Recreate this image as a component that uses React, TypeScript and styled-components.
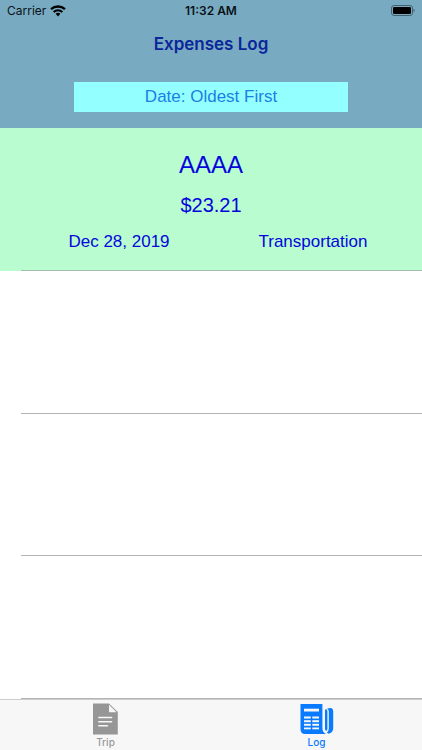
import React, { useState } from "react";
import styled, { createGlobalStyle } from "styled-components";

const GlobalStyle = createGlobalStyle`
  *, *::before, *::after { box-sizing: border-box; }
  body {
    margin: 0;
    background: #ffffff;
    font-family: "Liberation Sans", Arial, sans-serif;
  }
  h1, h2, p { margin: 0; font-weight: 400; }
`;

const Screen = styled.div`
  min-height: 100vh;
  display: flex;
  flex-direction: column;
`;

const Header = styled.header`
  background: #78abc2;
  height: 128px;
  display: flex;
  flex-direction: column;
`;

const StatusBar = styled.div`
  height: 22px;
  padding: 0 7px;
  display: grid;
  grid-template-columns: 1fr auto 1fr;
  align-items: center;
  font: 400 12px/22px Inter, sans-serif;
  color: #0b1217;
`;

const Carrier = styled.div`
  display: flex;
  align-items: center;
  gap: 4px;
`;

const Clock = styled.time`
  font-weight: 600;
`;

const BatterySlot = styled.div`
  display: flex;
  justify-content: flex-end;
`;

const Title = styled.h1`
  font: 600 17px/44px Inter, sans-serif;
  color: #0b2699;
  text-align: center;
`;

const SortButton = styled.button`
  width: 65%;
  height: 30px;
  margin: 16px auto 0;
  padding: 0;
  border: 0;
  border-radius: 0;
  background: #94ffff;
  color: #1a80e6;
  font: 400 17px/30px "Liberation Sans", Arial, sans-serif;
  cursor: pointer;
`;

const List = styled.ul`
  flex: 1;
  margin: 0;
  padding: 0;
  list-style: none;
  display: grid;
  grid-auto-rows: minmax(140px, 1fr);
`;

const Row = styled.li<{ $filled?: boolean }>`
  display: flex;
  flex-direction: column;
  background: ${(p) => (p.$filled ? "#b8fccf" : "#ffffff")};
  color: #0505dc;
  text-align: center;

  &::after {
    content: "";
    height: 1px;
    margin: auto 0 0 21px;
    background: ${(p) => (p.$filled ? "#a5bdb0" : "#b4b4b4")};
  }
`;

const Name = styled.h2`
  padding-top: 21px;
  font-size: 24px;
  line-height: 32px;
`;

const Amount = styled.p`
  padding-top: 9px;
  font-size: 20px;
  line-height: 30px;
`;

const Details = styled.div`
  display: grid;
  grid-template-columns: 1fr 1fr;
  padding: 10px 12px 0 22px;
  font-size: 17px;
  line-height: 24px;
`;

const TabBar = styled.nav`
  height: 51px;
  display: flex;
  background: #f7f7f7;
  border-top: 1px solid #cccccc;
`;

const Tab = styled.a<{ $active?: boolean }>`
  flex: 1;
  display: flex;
  flex-direction: column;
  align-items: center;
  padding-top: 3px;
  font: 500 10px/12px Inter, sans-serif;
  color: ${(p) => (p.$active ? "#0a7aff" : "#999999")};
  text-decoration: none;

  svg { margin-bottom: 1px; }
`;

const WifiIcon = () => (
  <svg width="16" height="12" viewBox="0 0 16 12" fill="none" stroke="#000" aria-hidden="true">
    <path d="M1 4.2C5 .6 11 .6 15 4.2" strokeWidth="2.3" />
    <path d="M3.6 7C6.2 4.7 9.8 4.7 12.4 7" strokeWidth="2.1" />
    <path d="M5.6 8.8C7 7.5 9 7.5 10.4 8.8L8 11.4Z" fill="#000" stroke="none" />
  </svg>
);

const BatteryIcon = () => (
  <svg width="25" height="12" viewBox="0 0 25 12" role="img" aria-label="Battery full">
    <rect x="1.5" y="0.5" width="21" height="10" rx="2.6" fill="none" stroke="#42616e" />
    <rect x="3" y="2" width="18" height="7" rx="1.2" fill="#000" />
    <path d="M23.6 3.8C24.9 4.3 24.9 6.7 23.6 7.2Z" fill="#36515c" />
  </svg>
);

const TripIcon = () => (
  <svg width="25" height="32" viewBox="0 0 25 32" aria-hidden="true">
    <path d="M0 0.5H16L24.8 9V31.5H0Z" fill="#969696" />
    <path d="M16 1.8L23.6 9.2H16Z" fill="#f7f7f7" />
    <path d="M5.8 14.5H18.7M5.8 18.7H18.7M5.8 22.8H14.5" stroke="#f7f7f7" strokeWidth="1.4" strokeLinecap="round" />
  </svg>
);

const LogIcon = () => (
  <svg width="34" height="32" viewBox="0 0 34 32" aria-hidden="true">
    <path
      d="M.5 1H22.4V25C22.4 28 23.6 30 26 31H5C2 31 .5 29 .5 26Z"
      fill="#0a7aff"
    />
    <path
      d="M25 8.2V25.5Q25 27.8 26.2 27.8Q27.4 27.8 27.4 25.5V8.5Q27.4 6 25.8 6Q25 6.4 25 8.2Z"
      fill="#0a7aff"
    />
    <path
      d="M27 5.8Q28.8 5 30.3 5Q33.2 5 33.2 8.5V25Q33.2 29.6 28.6 30.8L26.8 29.4Q28.8 28.2 28.8 25.5V8.5Q28.8 6.6 27 5.8Z"
      fill="#0a7aff"
    />
    <g fill="#f7f7f7">
      <rect x="4" y="5.7" width="15" height="2.8" />
      <rect x="4" y="13.5" width="6.8" height="2" />
      <rect x="12.3" y="13.5" width="6.7" height="2" />
      <rect x="4" y="17.2" width="6.8" height="2" />
      <rect x="12.3" y="17.2" width="6.7" height="2" />
      <rect x="4" y="20.8" width="6.8" height="2" />
      <rect x="12.3" y="20.8" width="6.7" height="2" />
      <rect x="4" y="24.5" width="6.8" height="1.8" />
      <rect x="12.3" y="24.5" width="6.7" height="1.8" />
    </g>
  </svg>
);

const expenses = [
  { name: "AAAA", amount: 23.21, date: "Dec 28, 2019", category: "Transportation" },
];
const emptyRows = [1, 2, 3];

export default function App() {
  const [oldestFirst, setOldestFirst] = useState(true);

  return (
    <Screen>
      <GlobalStyle />
      <Header>
        <StatusBar>
          <Carrier>
            Carrier <WifiIcon />
          </Carrier>
          <Clock>11:32 AM</Clock>
          <BatterySlot>
            <BatteryIcon />
          </BatterySlot>
        </StatusBar>
        <Title>Expenses Log</Title>
        <SortButton type="button" onClick={() => setOldestFirst(!oldestFirst)}>
          {oldestFirst ? "Date: Oldest First" : "Date: Newest First"}
        </SortButton>
      </Header>
      <List>
        {expenses.map((e) => (
          <Row key={e.name} $filled>
            <Name>{e.name}</Name>
            <Amount>${e.amount.toFixed(2)}</Amount>
            <Details>
              <span>{e.date}</span>
              <span>{e.category}</span>
            </Details>
          </Row>
        ))}
        {emptyRows.map((n) => (
          <Row key={n} aria-hidden="true" />
        ))}
      </List>
      <TabBar>
        <Tab href="#trip">
          <TripIcon />
          Trip
        </Tab>
        <Tab href="#log" $active aria-current="page">
          <LogIcon />
          Log
        </Tab>
      </TabBar>
    </Screen>
  );
}
